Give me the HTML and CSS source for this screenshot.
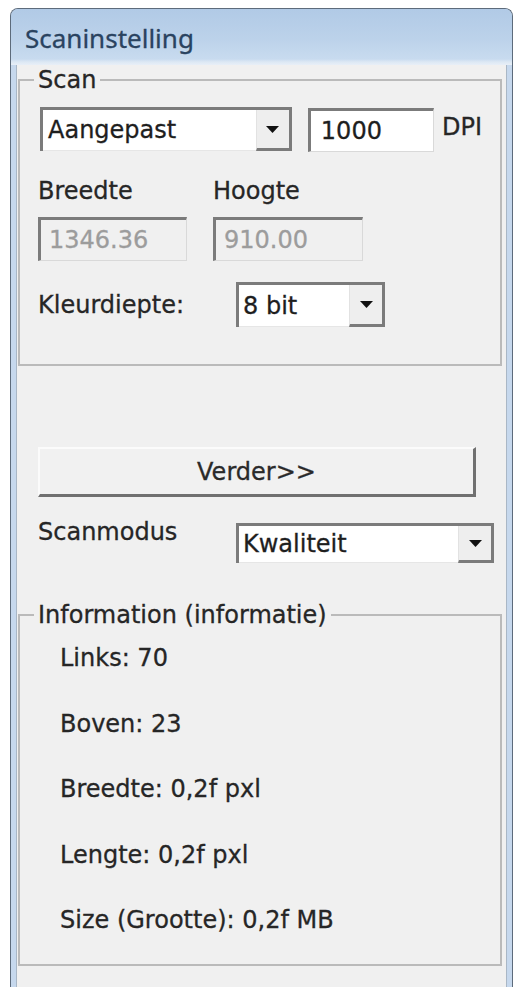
FILE: index.html
```html
<!DOCTYPE html>
<html lang="nl">
<head>
<meta charset="utf-8">
<title>Scaninstelling</title>
<link rel="stylesheet" href="styles.css">
</head>
<body>
<div class="window">
  <div class="titlebar"><span class="title">Scaninstelling</span></div>
  <div class="client">
    <fieldset class="group group-scan">
      <legend>Scan</legend>
      <div class="row row-res">
        <div class="combo combo-preset">
          <span class="combo-text">Aangepast</span>
          <span class="drop"><svg width="13" height="7" viewBox="0 0 13 7"><path d="M0 0H13L6.5 7Z" fill="#111"/></svg></span>
        </div>
        <div class="edit edit-dpi">1000</div>
        <span class="unit">DPI</span>
      </div>
      <div class="size-grid">
        <span class="label">Breedte</span>
        <span class="label">Hoogte</span>
        <div class="edit edit-disabled edit-w">1346.36</div>
        <div class="edit edit-disabled edit-h">910.00</div>
      </div>
      <div class="row row-depth">
        <span class="label label-col">Kleurdiepte:</span>
        <div class="combo combo-depth">
          <span class="combo-text">8 bit</span>
          <span class="drop"><svg width="13" height="7" viewBox="0 0 13 7"><path d="M0 0H13L6.5 7Z" fill="#111"/></svg></span>
        </div>
      </div>
    </fieldset>

    <div class="button">Verder&gt;&gt;</div>

    <div class="row row-mode">
      <span class="label label-col">Scanmodus</span>
      <div class="combo combo-mode">
        <span class="combo-text">Kwaliteit</span>
        <span class="drop"><svg width="13" height="7" viewBox="0 0 13 7"><path d="M0 0H13L6.5 7Z" fill="#111"/></svg></span>
      </div>
    </div>

    <fieldset class="group group-info">
      <legend>Information (informatie)</legend>
      <div class="info-list">
        <span class="info">Links: 70</span>
        <span class="info">Boven: 23</span>
        <span class="info">Breedte: 0,2f pxl</span>
        <span class="info">Lengte: 0,2f pxl</span>
        <span class="info">Size (Grootte): 0,2f MB</span>
      </div>
    </fieldset>
  </div>
</div>
</body>
</html>
```
FILE: styles.css
```css
html, body {
  margin: 0;
  height: 987px;
  overflow: hidden;
  background: #ffffff;
}
body {
  font-family: "DejaVu Sans", "Liberation Sans", sans-serif;
  font-size: 24px;
  line-height: 28px;
  color: #262626;
  -webkit-text-stroke: 0.3px currentColor;
}
.window {
  box-sizing: border-box;
  margin: 8px 0 0 10px;
  width: 503px;
  height: 979px;
  border: 1px solid #5d6b7b;
  border-bottom: none;
  border-radius: 8px 8px 0 0;
  background: #c6d8ed;
  padding: 0 5px;
  display: flex;
  flex-direction: column;
}
.titlebar {
  box-sizing: border-box;
  height: 56px;
  margin: 0 -5px;
  padding: 11px 0 0 14px;
  border-radius: 7px 7px 0 0;
  background: linear-gradient(#b1cae6 0px, #bcd2ea 30px, #c8dbef 50px, #dde8f4 53px, #e8eff7 56px);
}
.title {
  font-family: "Noto Sans", "Open Sans", sans-serif;
  font-size: 26px;
  line-height: 36px;
  color: #2a4360;
}
.client {
  flex: 1;
  background: #f0f0f0;
  border-left: 1px solid #a9b7c6;
  border-right: 1px solid #a9b7c6;
  padding-top: 1px;
}
.group {
  margin: 0 4px 0 1px;
  border: 2px solid #bababa;
  padding: 13px 18px 37px 18px;
  min-width: 0;
}
.group legend {
  padding: 0 4px;
  margin-left: -4px;
  line-height: 28px;
}
.row {
  display: flex;
}
.row-res {
  align-items: flex-start;
}
.combo {
  box-sizing: border-box;
  display: flex;
  background: #ffffff;
  border-top: 3px solid #7b7b7b;
  border-left: 3px solid #7b7b7b;
}
.combo-text {
  flex: 1;
  display: flex;
  align-items: center;
  padding-left: 4px;
  border-bottom: 1px solid #e6e6e6;
  color: #1e1e1e;
}
.drop {
  box-sizing: border-box;
  width: 36px;
  display: flex;
  align-items: center;
  justify-content: center;
  background: #eeeeee;
  border-left: 1px solid #e2e2e2;
  border-right: 3px solid #7b7b7b;
  border-bottom: 3px solid #7b7b7b;
}
.combo-preset {
  margin-left: 2px;
  width: 256px;
  height: 44px;
}
.combo-preset .combo-text {
  padding-left: 5px;
}
.edit {
  box-sizing: border-box;
  height: 44px;
  display: flex;
  align-items: center;
  padding-left: 8px;
  border-top: 3px solid #7b7b7b;
  border-left: 3px solid #7b7b7b;
  border-right: 1px solid #d9d9d9;
  border-bottom: 1px solid #d9d9d9;
  background: #ffffff;
  color: #1e1e1e;
}
.edit-dpi {
  margin: 1px 0 0 16px;
  width: 128px;
  padding-left: 10px;
}
.unit {
  margin: 6px 0 0 8px;
}
.size-grid {
  display: grid;
  grid-template-columns: 175px 150px;
  row-gap: 12px;
  margin-top: 25px;
}
.edit-disabled {
  background: #f0f0f0;
  color: #9c9c9c;
}
.edit-w {
  width: 149px;
}
.edit-h {
  width: 150px;
}
.row-depth {
  align-items: center;
  margin-top: 21px;
}
.label-col {
  width: 198px;
  flex: none;
}
.combo-depth {
  width: 149px;
  height: 45px;
}
.button {
  box-sizing: border-box;
  margin: 81px 0 0 21px;
  width: 438px;
  height: 50px;
  display: flex;
  align-items: center;
  justify-content: center;
  background: #f1f1f1;
  border-top: 2px solid #fbfbfb;
  border-left: 2px solid #fbfbfb;
  border-right: 3px solid #707070;
  border-bottom: 3px solid #707070;
  color: #2a2a2a;
}
.row-mode {
  align-items: flex-start;
  margin: 21px 0 0 21px;
}
.combo-mode {
  margin-top: 5px;
  width: 258px;
  height: 40px;
}
.group-info {
  margin-top: 38px;
  padding: 15px 18px 30px 18px;
}
.info-list {
  display: flex;
  flex-direction: column;
  gap: 37.5px;
  padding-left: 22px;
}
```
